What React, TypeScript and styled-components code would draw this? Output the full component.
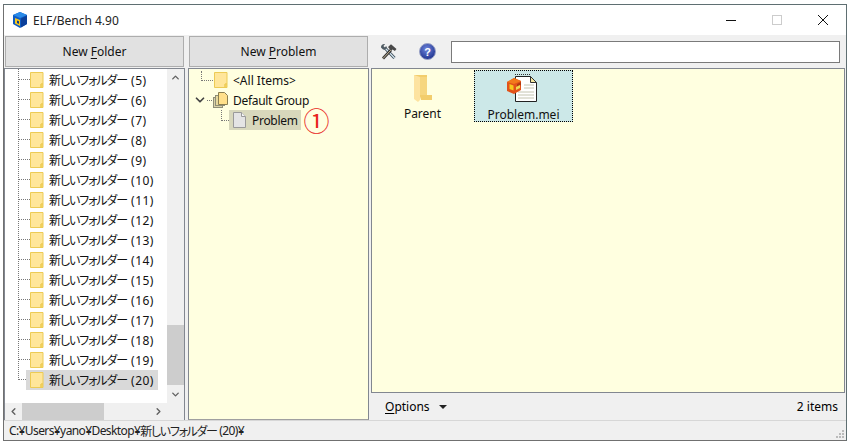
import styled, { createGlobalStyle } from "styled-components";
import { ChevronDown, ChevronLeft, ChevronRight, ChevronUp } from "lucide-react";

const UI_FONT = `"Noto Sans", "Noto Sans CJK JP", sans-serif`;
const PANEL_YELLOW = "#ffffe0";

const Global = createGlobalStyle`
    html, body {
        margin: 0;
        padding: 0;
        width: 850px;
        height: 443px;
        overflow: hidden;
        background: #fff;
    }
    * { box-sizing: border-box; }
`;

const Page = styled.div`
    width: 850px;
    height: 443px;
    padding: 4px 3px 2px 3px;
`;

const Window = styled.div`
    width: 844px;
    height: 437px;
    display: flex;
    flex-direction: column;
    border: 1px solid #5f6f72;
    border-left-color: #707070;
    border-bottom-color: #707070;
    background: #f0f0f0;
    font-family: ${UI_FONT};
    font-size: 12px;
    color: #000;
`;

const TitleBar = styled.div`
    height: 30px;
    flex: none;
    display: flex;
    align-items: center;
    padding-left: 8px;
    background: #fff;
`;

const TitleText = styled.div`
    margin-left: 5px;
    font-size: 12px;
    color: #222;
    flex: 1;
`;

const WinButton = styled.div`
    width: 46px;
    height: 30px;
    display: flex;
    align-items: center;
    justify-content: center;
`;

const Body = styled.div`
    flex: 1;
    min-height: 0;
    display: grid;
    grid-template-columns: 181px 181px 1fr;
    column-gap: 3px;
    padding: 1px 1px 0 0;
`;

const Column = styled.div`
    display: flex;
    flex-direction: column;
    min-width: 0;
    height: 384px;
`;

const BigButton = styled.div`
    height: 31px;
    flex: none;
    display: flex;
    align-items: center;
    justify-content: center;
    background: #e1e1e1;
    border: 1px solid #adadad;
    margin-left: 1px;
    margin-right: 1px;
    margin-bottom: 1px;
    color: #111;
`;

const Key = styled.span`
    text-decoration: underline;
    text-underline-offset: 2px;
`;

const FolderPanel = styled.div`
    flex: 1;
    min-height: 0;
    display: grid;
    grid-template-columns: 1fr 17px;
    grid-template-rows: 1fr 17px;
    border: 1px solid #828790;
    border-bottom: none;
    background: #fff;
`;

const TreeList = styled.div`
    overflow: hidden;
    padding-top: 1px;
`;

const Row = styled.div<{ $selected?: boolean }>`
    position: relative;
    height: 20px;
    display: flex;
    align-items: center;
    padding-left: 25px;

    &::before {
        content: "";
        position: absolute;
        left: 13px;
        top: 9px;
        width: 12px;
        border-top: 1px dotted #777;
    }

    &::after {
        content: "";
        position: absolute;
        left: 13px;
        top: -1px;
        height: ${(p) => (p.$selected ? "11px" : "21px")};
        border-left: 1px dotted #777;
    }
`;

const RowLabel = styled.span<{ $selected?: boolean }>`
    display: flex;
    align-items: center;
    height: 20px;
    gap: 5px;
    padding: 0 4px;
    margin-left: -4px;
    position: relative;
    z-index: 1;
    background: ${(p) => (p.$selected ? "#d9d9d9" : "transparent")};
    color: #111;
    white-space: nowrap;
`;

const Japanese = styled.span`
    font-feature-settings: "palt";
    letter-spacing: -1.1px;
`;

const RowNumber = styled.span`
    margin-left: 4px;
    letter-spacing: 0.45px;
`;

const ScrollV = styled.div`
    display: flex;
    flex-direction: column;
    align-items: center;
    background: #f0f0f0;
`;

const ScrollH = styled.div`
    display: flex;
    align-items: center;
    background: #f0f0f0;
`;

const ScrollArrow = styled.div`
    width: 17px;
    height: 17px;
    flex: none;
    display: flex;
    align-items: center;
    justify-content: center;
    color: #606060;
`;

const VTrack = styled.div`
    flex: 1;
    width: 100%;
    display: flex;
    flex-direction: column;
    justify-content: flex-end;
    padding-bottom: 1px;
`;

const VThumb = styled.div`
    width: 100%;
    height: 60px;
    background: #cdcdcd;
`;

const HTrack = styled.div`
    flex: 1;
    height: 100%;
`;

const HThumb = styled.div`
    width: 82px;
    height: 100%;
    background: #cdcdcd;
`;

const Corner = styled.div`
    background: #f0f0f0;
`;

const ProblemPanel = styled.div`
    flex: 1;
    min-height: 0;
    border: 1px solid #828790;
    border-bottom-color: #a0a0a0;
    background: ${PANEL_YELLOW};
    padding-top: 1px;
`;

const GroupRow = styled.div<{ $indent: number }>`
    position: relative;
    height: 20px;
    display: flex;
    align-items: center;
    padding-left: ${(p) => p.$indent}px;
    gap: 5px;
    white-space: nowrap;
    color: #111;
`;

const Elbow = styled.span<{ $left: number; $width: number; $height: number }>`
    position: absolute;
    left: ${(p) => p.$left}px;
    bottom: 9px;
    width: ${(p) => p.$width}px;
    height: ${(p) => p.$height}px;
    border-left: 1px dotted #777;
    border-bottom: 1px dotted #777;
`;

const Stub = styled.span`
    position: absolute;
    left: 18px;
    top: 10px;
    width: 5px;
    border-top: 1px dotted #777;
`;

const Expander = styled.span`
    position: absolute;
    left: 4px;
    top: 3px;
    display: flex;
    color: #444;
`;

const GroupName = styled.span`
    margin-left: -1px;
    letter-spacing: -0.3px;
`;

const SelectedProblem = styled.span`
    display: flex;
    align-items: center;
    gap: 6px;
    height: 20px;
    padding: 0 3px 0 4px;
    letter-spacing: -0.3px;
    background: #d8d8bc;
`;

const CircledOne = styled.span`
    margin-left: -2px;
    font-family: "Noto Sans CJK JP", serif;
    font-size: 26px;
    line-height: 20px;
    color: #e8261c;
`;

const RightColumn = styled(Column)`
    margin-left: -1px;
`;

const Toolbar = styled.div`
    height: 31px;
    flex: none;
    display: flex;
    align-items: center;
    padding: 0 5px 0 9px;
    margin-bottom: 1px;
`;

const ToolIcon = styled.div`
    width: 18px;
    height: 18px;
    display: flex;
    align-items: center;
    justify-content: center;
    margin-right: 20px;

    &:nth-of-type(2) {
        margin-right: 15px;
    }
`;

const SearchBox = styled.div`
    flex: 1;
    height: 22px;
    background: #fff;
    border: 1px solid #7a7a7a;
`;

const FilePanel = styled.div`
    flex: 1;
    min-height: 0;
    display: flex;
    align-items: flex-start;
    gap: 2px;
    border: 1px solid #828790;
    background: ${PANEL_YELLOW};
    padding: 1px 0 0 1px;
`;

const FileItem = styled.div<{ $selected?: boolean }>`
    width: 99px;
    height: 52px;
    display: flex;
    flex-direction: column;
    align-items: center;
    padding-top: 3px;
    background: ${(p) => (p.$selected ? "#cce8e8" : "transparent")};
    outline: ${(p) => (p.$selected ? "1px dotted #000" : "none")};
    outline-offset: -1px;
    color: #111;
`;

const FileArt = styled.div<{ $shift?: number }>`
    height: 30px;
    display: flex;
    align-items: flex-end;
    margin-bottom: 3px;
    margin-right: ${(p) => p.$shift ?? 0}px;
`;

const OptionsBar = styled.div`
    height: 27px;
    flex: none;
    display: flex;
    align-items: center;
    justify-content: space-between;
    padding: 0 7px 0 14px;
`;

const OptionsLabel = styled.div`
    display: flex;
    align-items: center;
    gap: 9px;
`;

const Caret = styled.span`
    width: 0;
    height: 0;
    border-left: 4px solid transparent;
    border-right: 4px solid transparent;
    border-top: 4px solid #222;
`;

const StatusBar = styled.div`
    height: 20px;
    flex: none;
    position: relative;
    display: flex;
    align-items: center;
    padding-left: 5px;
    border-top: 1px solid #d7d7d7;
    font-size: 12px;
    letter-spacing: -0.6px;
    white-space: pre;
    color: #222;
`;

const StatusJapanese = styled.span`
    font-feature-settings: "palt";
    letter-spacing: -1.3px;
`;

const Grip = styled.svg`
    position: absolute;
    right: 1px;
    bottom: 1px;
`;

const FolderIcon = () => (
    <svg width="14" height="16" viewBox="0 0 14 16">
        <path d="M.5.5h12.500v11.500h-2v3.500H.5z" fill="#ffe69a" stroke="#eccb55" />
        <path d="M11 12h2v3.500h-2z" fill="#f5d565" stroke="#eccb55" />
    </svg>
);

const GroupIcon = () => (
    <svg width="16" height="16" viewBox="0 0 16 16">
        <rect x=".5" y="5.500" width="9" height="10" fill="#d9d2a8" stroke="#8d8d78" />
        <rect x="2.500" y="3.500" width="9" height="10" fill="#e6d9a0" stroke="#8d8d78" />
        <path d="M5.500.5h6l3 3v9h-9z" fill="#ffe08a" stroke="#8a7f50" />
    </svg>
);

const PageIcon = () => (
    <svg width="13" height="16" viewBox="0 0 13 16">
        <path d="M.5.5h8l4 4v11H.5z" fill="#e4e4e4" stroke="#9a9a9a" />
        <path d="M8.500.5v4h4" fill="#f4f4f4" stroke="#9a9a9a" />
    </svg>
);

const LargeFolder = () => (
    <svg width="18" height="27" viewBox="0 0 18 27">
        <path d="M0 0h13v20h5v5H7z" fill="#f2cd6c" />
        <path d="M6 2h7v18h-7z" fill="#f6d67f" />
        <path d="M0 0l6 2v23l-2 2-4-3z" fill="#fde3a0" />
    </svg>
);

const AppLogo = () => (
    <svg width="16" height="16" viewBox="0 0 16 16">
        <path d="M8 0l7 3v9l-7 4-7-4V3z" fill="#0f5cc4" />
        <path d="M8 0l7 3-7 3-7-3z" fill="#2a8ae8" />
        <path d="M9 6.500l6-3v8.500l-6 3.500z" fill="#0a3f9a" />
        <path d="M3 6l5 2v6l-5-2.500z" fill="#f8c81c" />
        <path d="M5 8.500l2 .8v2.700l-2-.9z" fill="#0b3a8c" />
    </svg>
);

const MeiFile = () => (
    <svg width="32" height="30" viewBox="0 0 32 30">
        <path d="M9.500 3.500h15l6 6v19h-21z" fill="#fff" stroke="#222" />
        <path d="M9 1.500h15" stroke="#333" strokeDasharray="1 1" />
        <path d="M24.500 3.500v6h6z" fill="#f3e6a0" stroke="#333" />
        <path d="M18 12h10M18 15h10M12 19h16M12 22h16M12 25h16" stroke="#c4c4b0" />
        <path d="M1 9l7-4 7 3v9l-7 4-7-3z" fill="#e2521a" />
        <path d="M1 9l7-4 7 3-7 3z" fill="#f27a1c" />
        <path d="M3.500 11l4 1.500v5l-4-1.500z" fill="#f6c81c" />
        <path d="M11 11l4-2v3l-4 2z" fill="#b33a10" />
        <path d="M10 14l4-2v3l-4 2z" fill="#f0d850" />
    </svg>
);

const ToolsIcon = () => (
    <svg width="18" height="18" viewBox="0 0 18 18" fill="none">
        <path d="M4.500 4.500L14.500 15" stroke="#3b4a55" strokeWidth="3" />
        <path d="M4.500 4.500L14.500 15" stroke="#d6e6f0" strokeWidth="1.200" />
        <path d="M1 4.500C.8 2.200 3 .7 5 1.200L3.400 3 4.800 4.600 6.800 3.200c.4 2-1.500 4-3.800 3.300z" fill="#4f5b63" />
        <path d="M11 7L3 15.500" stroke="#333" strokeWidth="2.800" />
        <path d="M11 7L3 15.500" stroke="#c9b99a" strokeWidth="1" />
        <path d="M8 4l3-2.700 5.500 4.700-1.600 2-2.400-1.500-1.500 1.300z" fill="#4a4a4a" />
    </svg>
);

const HelpIcon = () => (
    <svg width="17" height="17" viewBox="0 0 17 17">
        <defs>
            <radialGradient id="helpBall" cx="45%" cy="35%" r="65%">
                <stop offset="0" stopColor="#6f86dd" />
                <stop offset="1" stopColor="#20338f" />
            </radialGradient>
        </defs>
        <circle cx="8.500" cy="8.500" r="8" fill="url(#helpBall)" stroke="#9aa3c6" />
        <text x="8.500" y="12.500" textAnchor="middle" fontSize="11" fontWeight="700" fontFamily="Liberation Sans" fill="#fff">
            ?
        </text>
    </svg>
);

const folderNumbers = Array.from({ length: 16 }, (_, i) => i + 5);

function App() {
    return (
        <Page>
            <Global />
            <Window>
                <TitleBar>
                    <AppLogo />
                    <TitleText>ELF/Bench 4.90</TitleText>
                    <WinButton>
                        <svg width="10" height="10" viewBox="0 0 10 10">
                            <path d="M0 5.500h10" stroke="#111" />
                        </svg>
                    </WinButton>
                    <WinButton>
                        <svg width="10" height="10" viewBox="0 0 10 10">
                            <rect x=".5" y=".5" width="9" height="9" fill="none" stroke="#ccc" />
                        </svg>
                    </WinButton>
                    <WinButton>
                        <svg width="10" height="10" viewBox="0 0 10 10">
                            <path d="M0 0l10 10M10 0L0 10" stroke="#111" />
                        </svg>
                    </WinButton>
                </TitleBar>
                <Body>
                    <Column>
                        <BigButton>
                            New&nbsp;<Key>F</Key>older
                        </BigButton>
                        <FolderPanel>
                            <TreeList>
                                {folderNumbers.map((n) => (
                                    <Row key={n} $selected={n === 20}>
                                        <RowLabel $selected={n === 20}>
                                            <FolderIcon />
                                            <span>
                                                <Japanese>新しいフォルダー</Japanese>
                                                <RowNumber>({n})</RowNumber>
                                            </span>
                                        </RowLabel>
                                    </Row>
                                ))}
                            </TreeList>
                            <ScrollV>
                                <ScrollArrow>
                                    <ChevronUp size={11} strokeWidth={3} />
                                </ScrollArrow>
                                <VTrack>
                                    <VThumb />
                                </VTrack>
                                <ScrollArrow>
                                    <ChevronDown size={11} strokeWidth={3} />
                                </ScrollArrow>
                            </ScrollV>
                            <ScrollH>
                                <ScrollArrow>
                                    <ChevronLeft size={11} strokeWidth={3} />
                                </ScrollArrow>
                                <HTrack>
                                    <HThumb />
                                </HTrack>
                                <ScrollArrow>
                                    <ChevronRight size={11} strokeWidth={3} />
                                </ScrollArrow>
                            </ScrollH>
                            <Corner />
                        </FolderPanel>
                    </Column>
                    <Column>
                        <BigButton>
                            New&nbsp;<Key>P</Key>roblem
                        </BigButton>
                        <ProblemPanel>
                            <GroupRow $indent={25}>
                                <Elbow $left={12} $width={12} $height={10} />
                                <FolderIcon />
                                &lt;All Items&gt;
                            </GroupRow>
                            <GroupRow $indent={24}>
                                <Expander>
                                    <ChevronDown size={14} strokeWidth={3} />
                                </Expander>
                                <Stub />
                                <GroupIcon />
                                <GroupName>Default Group</GroupName>
                            </GroupRow>
                            <GroupRow $indent={40}>
                                <Elbow $left={32} $width={8} $height={11} />
                                <SelectedProblem>
                                    <PageIcon />
                                    Problem
                                </SelectedProblem>
                                <CircledOne>①</CircledOne>
                            </GroupRow>
                        </ProblemPanel>
                    </Column>
                    <RightColumn>
                        <Toolbar>
                            <ToolIcon>
                                <ToolsIcon />
                            </ToolIcon>
                            <ToolIcon>
                                <HelpIcon />
                            </ToolIcon>
                            <SearchBox />
                        </Toolbar>
                        <FilePanel>
                            <FileItem>
                                <FileArt>
                                    <LargeFolder />
                                </FileArt>
                                Parent
                            </FileItem>
                            <FileItem $selected>
                                <FileArt $shift={3}>
                                    <MeiFile />
                                </FileArt>
                                Problem.mei
                            </FileItem>
                        </FilePanel>
                        <OptionsBar>
                            <OptionsLabel>
                                <span>
                                    <Key>O</Key>ptions
                                </span>
                                <Caret />
                            </OptionsLabel>
                            <span>2 items</span>
                        </OptionsBar>
                    </RightColumn>
                </Body>
                <StatusBar>
                    C:¥Users¥yano¥Desktop¥<StatusJapanese>新しいフォルダー</StatusJapanese>{" (20)¥"}
                    <Grip width="11" height="11" viewBox="0 0 11 11">
                        <path d="M8 2h2v2H8zM5 5h2v2H5zM8 5h2v2H8zM2 8h2v2H2zM5 8h2v2H5zM8 8h2v2H8z" fill="#bbb" />
                    </Grip>
                </StatusBar>
            </Window>
        </Page>
    );
}

export default App;
